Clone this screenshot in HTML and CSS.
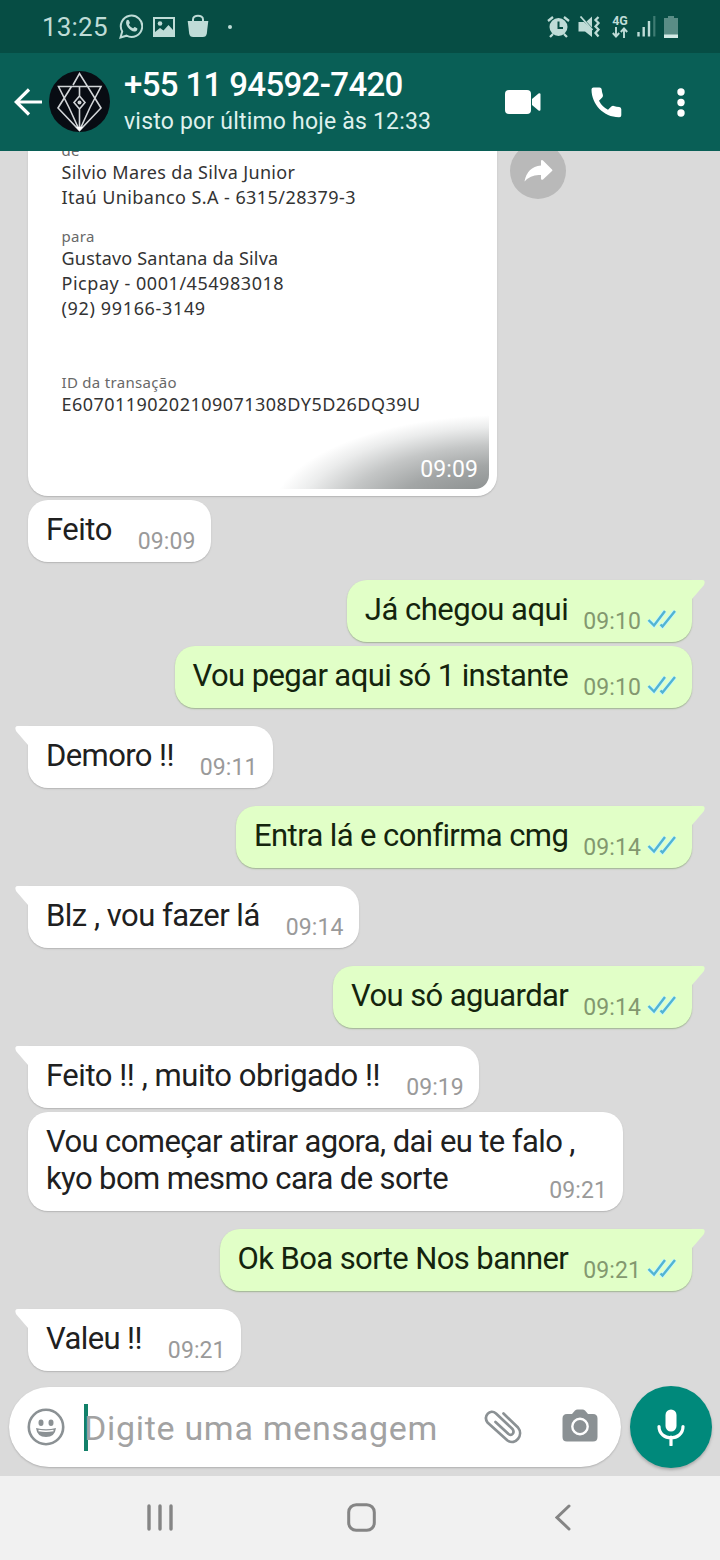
FILE: index.html
```html
<!DOCTYPE html>
<html lang="pt-BR">
<head>
<meta charset="utf-8">
<title>+55 11 94592-7420</title>
<link rel="stylesheet" href="styles.css">
</head>
<body>
<svg class="defs" width="0" height="0">
  <symbol id="ticks" viewBox="0 0 30 20">
    <path d="M1.500 11l5.500 5.500L18 2M13.500 15.500l2 2L28 2" fill="none" stroke="#c3f7ff" stroke-width="4"/>
    <path d="M1.500 11l5.500 5.500L18 2M13.500 15.500l2 2L28 2" fill="none" stroke="#52b4d2" stroke-width="2.400"/>
  </symbol>
</svg>
<div class="phone">
  <div class="status">
    <span class="clock">13:25</span>
    <svg class="s-wa" width="24" height="25" viewBox="0 0 24 25"><path d="M1.500 23.500l1.700-6A10.700 10.700 0 1 1 7.500 21.700z" fill="none" stroke="#bfdcd7" stroke-width="2"/><path d="M7.500 6.500c1-1 2-.8 2.400 0l.9 2c.3.900-.9 1.700-.9 2.100.9 1.800 2.200 3 4 3.700.6 0 1.300-1.600 2-1.300l2.200 1.200c.8.500 0 2.500-1.200 3-4.800 1.700-11.700-6-9.400-10.700z" fill="#bfdcd7"/></svg>
    <svg class="s-img" width="22" height="20" viewBox="0 0 22 20"><rect x="1" y="1" width="20" height="18" fill="none" stroke="#bfdcd7" stroke-width="2"/><circle cx="7" cy="6.500" r="2.300" fill="#bfdcd7"/><path d="M2 15l5-4 3.500 2.500L15.500 8l4.500 5v5H2z" fill="#bfdcd7"/></svg>
    <svg class="s-bag" width="22" height="24" viewBox="0 0 22 24"><path d="M6 8V5.500C6 .5 16 .5 16 5.500V8" fill="none" stroke="#bfdcd7" stroke-width="2"/><path d="M.7 7h20.600l-1.500 12.500q-.5 3.500-4 3.500H6.200q-3.500 0-4-3.500z" fill="#bfdcd7"/></svg>
    <i class="s-dot"></i>
    <span class="spacer"></span>
    <svg class="s-alarm" width="23" height="22" viewBox="0 0 23 22"><circle cx="11.500" cy="11" r="9" fill="#bfdcd7"/><path d="M1 5l5-4M22 5l-5-4M3 21l3-3M20 21l-3-3" stroke="#bfdcd7" stroke-width="2.300"/><path d="M11.500 5.500V12H16" fill="none" stroke="#064d44" stroke-width="2"/></svg>
    <svg class="s-mute" width="23" height="22" viewBox="0 0 23 22"><path d="M.5 6H6l8 7v8l-7-5.500H.5z" fill="#bfdcd7"/><path d="M2.500.5L14.500 14" stroke="#bfdcd7" stroke-width="1.800"/><path d="M14 .5v11L8.500 5.500z" fill="#bfdcd7"/><path d="M20.500 1l-3 3 3 3-3 3.500 3 3-3 3.500 3 3.500" fill="none" stroke="#bfdcd7" stroke-width="2.300"/></svg>
    <span class="s-net"><b>4G</b><svg width="16" height="11" viewBox="0 0 16 11"><path d="M4 0v9M.8 6L4 9.500 7.200 6M12 11V2M8.800 5L12 1.500 15.200 5" fill="none" stroke="#bfdcd7" stroke-width="1.900"/></svg></span>
    <svg class="s-sig" width="19" height="21" viewBox="0 0 19 21"><path d="M1.500 16v4.500M6.700 11v9.500M12 5v15.500" stroke="#bfdcd7" stroke-width="2.400"/><path d="M17.300 0v20.500" stroke="#3e7b72" stroke-width="2.200"/></svg>
    <svg class="s-bat" width="14" height="22" viewBox="0 0 14 22"><path d="M4 0h6v2h4v17H0V2h4z" fill="#5a8d86"/><path d="M0 18.500h14V22H0z" fill="#d5ebe7"/></svg>
  </div>

  <header class="bar">
    <svg class="back" width="28" height="28" viewBox="0 0 28 28"><path d="M28 14H3M15 1.500L2.200 14 15 26.500" fill="none" stroke="#fff" stroke-width="3.200"/></svg>
    <svg class="avatar" width="61" height="61" viewBox="0 0 61 61"><circle cx="30.500" cy="30.500" r="30.500" fill="#080c13"/><g fill="none" stroke="#d2d5d8" stroke-width="1.600"><path d="M24 14L30.500 2.500 52 37 30.500 59.500 9 37 22.500 15.500M20 36.500L9.500 15.500H52L41 36.500M30.500 15.500V25M30.500 38V59M30.500 25l5.500 6.500-5.500 6.500-5.500-6.500zM30.500 59.500L20 36.500M30.500 59.500l10.500-23"/></g><circle cx="30.500" cy="31.500" r="2" fill="#d2d5d8"/><path d="M27 56l3.500 4 3.500-4z" fill="#fff"/></svg>
    <div class="who"><div class="name">+55 11 94592-7420</div><div class="seen">visto por último hoje às 12:33</div></div>
    <span class="spacer"></span>
    <svg class="video" width="36" height="24" viewBox="0 0 36 24"><rect width="26" height="24" rx="4" fill="#fff"/><path d="M27 9l6.500-5.500q2-1 2 1v15q0 2-2 1L27 15z" fill="#fff"/></svg>
    <svg class="call" width="31" height="31" viewBox="0 0 31 31"><path d="M2.500.5h6q2 0 2.200 2 .2 3 1.200 5.500.4 1.300-.7 2.500L8 13.800q3 6 9 9l3.300-3.300q1.200-1 2.500-.6 2.700.9 5.500 1.100 2 .2 2 2.200v6q0 2-2 2C13 30.500.5 17.500.5 2.500q0-2 2-2z" fill="#fff"/></svg>
    <svg class="more" width="8" height="29" viewBox="0 0 8 29"><g fill="#fff"><circle cx="4" cy="4" r="3.700"/><circle cx="4" cy="14.500" r="3.700"/><circle cx="4" cy="25" r="3.700"/></g></svg>
  </header>

  <main class="chat">
    <div class="list">
      <div class="row first">
        <div class="receipt">
          <div class="lbl">de</div>
          <div class="ln l1">Silvio Mares da Silva Junior</div>
          <div class="ln l2">Itaú Unibanco S.A - 6315/28379-3</div>
          <div class="lbl para">para</div>
          <div class="ln l3">Gustavo Santana da Silva</div>
          <div class="ln l4">Picpay - 0001/454983018</div>
          <div class="ln l5">(92) 99166-3149</div>
          <div class="lbl tid">ID da transação</div>
          <div class="ln l6">E60701190202109071308DY5D26DQ39U</div>
          <div class="shade"><span class="time">09:09</span></div>
        </div>
        <div class="fwd"><svg width="29" height="22" viewBox="0 0 29 22"><path d="M17 0.500q1-.8 2 0l9 9q.8.800 0 1.600l-9 8.400q-2 1-2-1V15Q7 14 .5 21.500 3 7 17 5.500z" fill="#fff"/></svg></div>
      </div>
      <div class="row near"><div class="msg in snug"><p>Feito</p><span class="time">09:09</span></div></div>
      <div class="row right"><div class="msg out tail snug"><p>Já chegou aqui</p><span class="time">09:10</span><svg class="tk"><use href="#ticks"/></svg></div></div>
      <div class="row right near"><div class="msg out"><p>Vou pegar aqui só 1 instante</p><span class="time">09:10</span><svg class="tk"><use href="#ticks"/></svg></div></div>
      <div class="row"><div class="msg in tail"><p>Demoro !!</p><span class="time">09:11</span></div></div>
      <div class="row right"><div class="msg out tail"><p>Entra lá e confirma cmg</p><span class="time">09:14</span><svg class="tk"><use href="#ticks"/></svg></div></div>
      <div class="row"><div class="msg in tail snug"><p>Blz , vou fazer lá</p><span class="time">09:14</span></div></div>
      <div class="row right"><div class="msg out tail"><p>Vou só aguardar</p><span class="time">09:14</span><svg class="tk"><use href="#ticks"/></svg></div></div>
      <div class="row"><div class="msg in tail loose"><p>Feito !! , muito obrigado !!</p><span class="time">09:19</span></div></div>
      <div class="row near"><div class="msg in long"><p>Vou começar atirar agora, dai eu te falo ,<br>kyo bom mesmo cara de sorte</p><span class="time">09:21</span></div></div>
      <div class="row right"><div class="msg out tail"><p>Ok Boa sorte Nos banner</p><span class="time">09:21</span><svg class="tk"><use href="#ticks"/></svg></div></div>
      <div class="row"><div class="msg in tail"><p>Valeu !!</p><span class="time">09:21</span></div></div>
    </div>
    <div class="composer">
      <div class="field">
        <svg width="38" height="38" viewBox="0 0 38 38"><circle cx="19" cy="19" r="17.200" fill="none" stroke="#8b9194" stroke-width="2.600"/><ellipse cx="14" cy="14.800" rx="2.500" ry="3.200" fill="#8b9194"/><ellipse cx="24" cy="14.800" rx="2.500" ry="3.200" fill="#8b9194"/><path d="M9 20q10 2.500 20 0-1 9-10 9T9 20z" fill="#8b9194"/><path d="M11.500 22.500q7.500 1.500 15 0" fill="none" stroke="#fff" stroke-width="1.500"/></svg>
        <i class="caret"></i><span class="ph">Digite uma mensagem</span>
        <span class="spacer"></span>
        <svg class="clip" width="38" height="34" viewBox="0 0 38 34"><path d="M19.500 3.500L34 17.500C40 25 31.500 36 23.500 30.500L3.500 12.500C-1 6 6 -1.500 12 3.500L28.500 19C31 22.500 28 26.500 24.500 24L11.500 12" fill="none" stroke="#8b9194" stroke-width="2.700" stroke-linecap="round" stroke-linejoin="round"/></svg>
        <svg class="cam" width="36" height="33" viewBox="0 0 36 33"><path d="M5 5h5l3-3.500Q14 .5 15.500 .5h5Q22 .5 23 1.500L26 5h5q4.500 0 4.500 4.500V28q0 4.500-4.500 4.500H5Q.5 32.500.5 28V9.500Q.5 5 5 5z" fill="#8b9194"/><circle cx="18" cy="17.500" r="7.700" fill="none" stroke="#fff" stroke-width="2.400"/></svg>
      </div>
      <div class="mic"><svg width="28" height="37" viewBox="0 0 28 37"><rect x="8.500" y="0.500" width="11" height="22" rx="5.500" fill="#fff"/><path d="M2 17.500c0 15 24 15 24 0M14 28v8" fill="none" stroke="#fff" stroke-width="3.200" stroke-linecap="round"/></svg></div>
    </div>
  </main>

  <nav class="nav">
    <svg width="26" height="27" viewBox="0 0 26 27"><path d="M2 2v23M13 2v23M24 2v23" stroke="#858585" stroke-width="3.400" stroke-linecap="round"/></svg>
    <svg class="home" width="29" height="29" viewBox="0 0 29 29"><rect x="1.700" y="1.700" width="25.600" height="25.600" rx="7.500" fill="none" stroke="#858585" stroke-width="3"/></svg>
    <svg width="16" height="27" viewBox="0 0 16 27"><path d="M14 2L2 13.500 14 25" fill="none" stroke="#858585" stroke-width="3" stroke-linecap="round"/></svg>
  </nav>
</div>
</body>
</html>
```
FILE: styles.css
```css
* { box-sizing: border-box; }
body { margin: 0; font-family: Roboto, sans-serif; }
svg { display: block; flex: none; }
p { margin: 0; }
.defs { position: absolute; }
.phone { width: 720px; height: 1560px; display: flex; flex-direction: column; background: #dadada; overflow: hidden; }
.spacer { flex: 1; }

.status { height: 53px; flex: none; background: #064d44; display: flex; align-items: center; padding: 0 42px 0 42px; color: #bfdcd7; }
.clock { font-size: 26px; letter-spacing: 0.2px; width: 77px; }
.s-img { margin-left: 10px; }
.s-bag { margin-left: 12px; margin-top: -1px; }
.s-dot { width: 4px; height: 4px; border-radius: 50%; background: #bfdcd7; margin-left: 19px; }
.s-mute { margin-left: 8px; }
.s-net { display: flex; flex-direction: column; align-items: center; margin-left: 10px; width: 18px; }
.s-net b { font-size: 12.5px; line-height: 12px; }
.s-sig { margin-left: 8px; }
.s-bat { margin-left: 8px; }

.bar { height: 98px; flex: none; background: #095f56; display: flex; align-items: center; padding: 0 35px 0 14px; color: #fff; }
.avatar { margin-left: 7px; margin-top: -1px; }
.who { margin-left: 14px; white-space: nowrap; }
.name { font-size: 33px; font-weight: 500; line-height: 38px; letter-spacing: -0.65px; margin-top: 2px; }
.seen { font-size: 23px; line-height: 36px; letter-spacing: 0.2px; color: #dff0ed; }
.call { margin-left: 50px; }
.more { margin-left: 55px; }

.chat { flex: 1; min-height: 0; display: flex; flex-direction: column; overflow: hidden; }
.list { flex: 1; min-height: 0; display: flex; flex-direction: column; justify-content: flex-end; overflow: hidden; padding: 0 28px 16px; }
.row { display: flex; margin-top: 18px; flex: none; }
.row.near { margin-top: 4px; }
.row.right { justify-content: flex-end; }
.row.first { align-items: flex-start; gap: 13px; }

.receipt { position: relative; width: 469px; height: 356px; padding: 0 0 0 33.5px; background: #fff; border-radius: 0 0 20px 20px; box-shadow: 0 1px 1.5px #b4b4b4; font-family: "Noto Sans", sans-serif; color: #333; white-space: nowrap; }
.lbl { font-size: 15px; line-height: 20.5px; letter-spacing: 0.3px; color: #686868; }
.ln { font-size: 18px; line-height: 24.7px; }
.l1 { letter-spacing: 0.33px; margin-top: -0.5px; }
.l2 { letter-spacing: 0.43px; }
.l3 { letter-spacing: 0.2px; }
.l4 { letter-spacing: 0.54px; }
.l5 { letter-spacing: 0.65px; }
.l6 { letter-spacing: 0.47px; }
.lbl.para { margin-top: 16.5px; }
.lbl.tid { margin-top: 51px; }
.shade { position: absolute; right: 8px; bottom: 7px; width: 215px; height: 74px; border-radius: 0 0 14px 0; background: radial-gradient(ellipse 235px 100px at 108% 135%, #8b8f8f 0%, #8b8f8f 22%, #a3a6a6 50%, #c4c6c6 70%, #ebecec 88%, rgba(255,255,255,0) 100%); display: flex; justify-content: flex-end; align-items: flex-end; padding: 0 11px 6px 0; }
.shade .time { color: #fff; margin: 0; font-family: Roboto, sans-serif; }
.fwd { width: 56px; height: 56px; margin-top: 3px; border-radius: 50%; background: #b9b9b9; display: flex; align-items: center; justify-content: center; }

.msg { position: relative; display: flex; align-items: flex-end; padding: 11px 15.5px 7px 18px; border-radius: 20px; background: #fff; box-shadow: 0 1px 1.5px #b4b4b4; color: #202020; white-space: nowrap; }
.msg p { font-size: 31px; line-height: 37px; letter-spacing: -0.6px; margin-bottom: 7px; }
.msg.in p { padding-right: 1px; }
.msg.loose p { letter-spacing: -0.45px; }
.msg.snug p { letter-spacing: -0.5px; }
.msg.out { padding-right: 15px; background: #e1ffc7; color: #14240d; box-shadow: 0 1px 1.5px #9fb391; }
.time { font-size: 23px; line-height: 27px; letter-spacing: 0.1px; color: #9a9a9a; margin-left: 25px; }
.out .time { margin-left: 15px; color: #83986f; }
.tk { width: 30px; height: 20px; margin: 0 0 6px 6px; }
.msg.in.tail { border-top-left-radius: 0; }
.msg.out.tail { border-top-right-radius: 0; }
.tail::before { content: ""; position: absolute; top: 0; width: 14px; height: 20px; background: inherit; }
.in.tail::before { left: -13px; clip-path: path("M3 0H14V19H13L1 5Q-1 0 3 0Z"); }
.out.tail::before { right: -13px; clip-path: path("M11 0H0V19H1L13 5Q15 0 11 0Z"); }
.msg.long { width: 595px; padding-right: 16px; justify-content: space-between; }
.long .time { margin-left: -60px; }

.composer { height: 89px; flex: none; padding: 0 8px 9px 9px; display: flex; align-items: center; gap: 9px; }
.field { width: 612px; height: 80px; border-radius: 40px; background: #fff; box-shadow: 0 1px 2px #b0b0b0; display: flex; align-items: center; padding: 0 23px 0 18px; }
.caret { width: 4px; height: 47px; background: #128069; margin-left: 19px; }
.ph { font-size: 34px; line-height: 47px; color: #a2a2a2; letter-spacing: 0.7px; margin-left: -4px; margin-top: 2px; white-space: nowrap; }
.cam { margin-left: 40px; margin-top: -3px; }
.mic { width: 82px; height: 82px; flex: none; border-radius: 50%; background: #00897b; box-shadow: 0 2px 3px #aaa; display: flex; align-items: center; justify-content: center; }

.nav { height: 84px; flex: none; background: #f1f1f1; display: flex; align-items: center; justify-content: space-between; padding: 0 149px 2px 147px; }
.home { margin-right: 5px; }
```
